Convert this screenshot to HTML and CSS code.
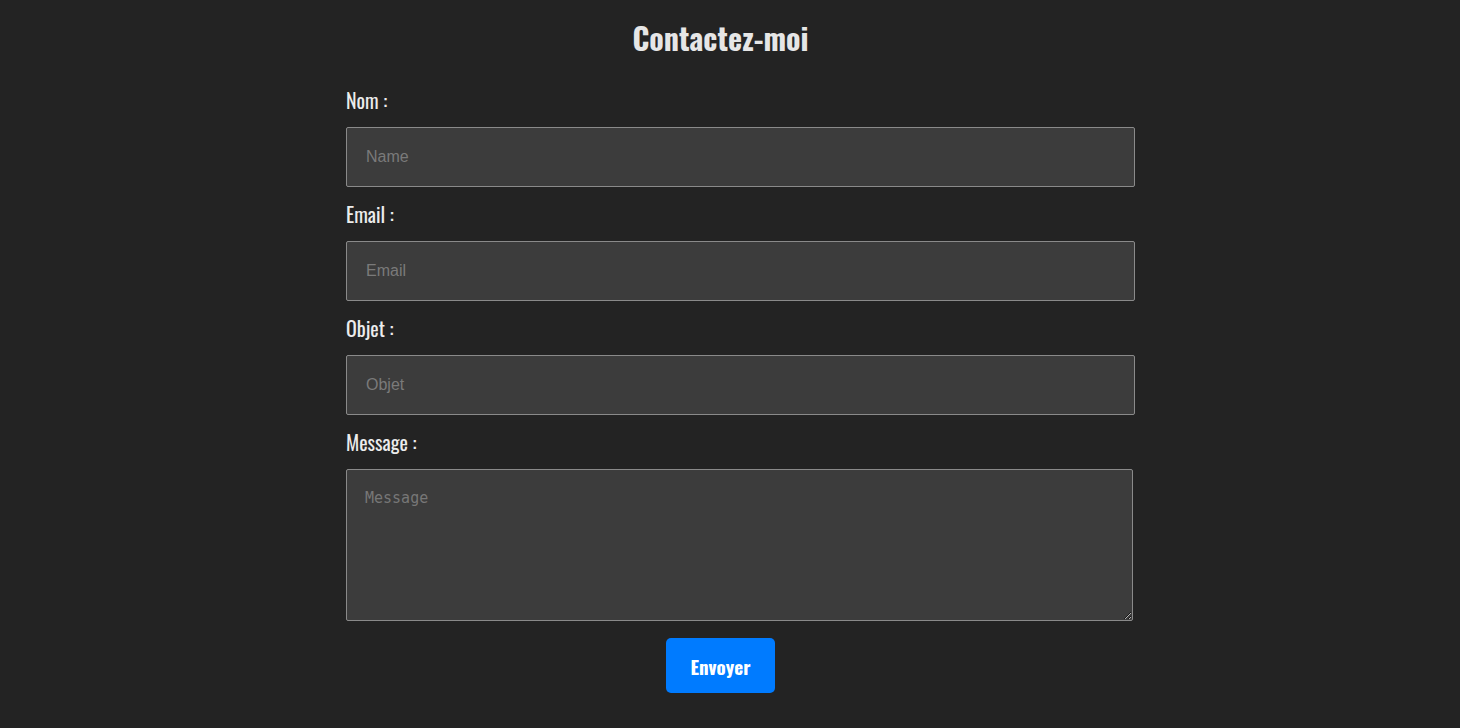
FILE: index.html
```html
<!DOCTYPE html>
<html lang="fr">
<head>
<meta charset="utf-8">
<title>Contact</title>
<link rel="stylesheet" href="styles.css">
</head>
<body>
<main class="page">
  <section class="contact">
    <h1 class="title">Contactez-moi</h1>
    <form class="form">
      <label class="label" for="nom">Nom :</label>
      <input class="field" id="nom" type="text" placeholder="Name">
      <label class="label" for="email">Email :</label>
      <input class="field" id="email" type="email" placeholder="Email">
      <label class="label" for="objet">Objet :</label>
      <input class="field" id="objet" type="text" placeholder="Objet">
      <label class="label" for="message">Message :</label>
      <textarea class="area" id="message" placeholder="Message"></textarea>
      <button class="send" type="submit">Envoyer</button>
    </form>
  </section>
</main>
</body>
</html>
```

FILE: styles.css
```css
html, body {
  margin: 0;
  padding: 0;
  background: #232323;
}
.page {
  padding-right: 19px;
}
.contact {
  width: 749px;
  margin: 0 auto;
  display: flex;
  flex-direction: column;
}
.title {
  margin: 18px 0 29px;
  font-family: "Oswald", "Liberation Sans Narrow", "DejaVu Sans Condensed", sans-serif;
  font-weight: 700;
  font-size: 30px;
  line-height: 40px;
  color: #e6e6e6;
  text-align: center;
}
.form {
  display: flex;
  flex-direction: column;
}
.label {
  font-family: "Oswald", "Liberation Sans Narrow", "DejaVu Sans Condensed", sans-serif;
  font-weight: 400;
  font-size: 20px;
  line-height: 27px;
  color: #ececec;
  margin-bottom: 13px;
}
.field {
  box-sizing: content-box;
  width: 749px;
  height: 58px;
  padding: 0 19px;
  margin: 0 0 14px;
  border: 1px solid #8a8a8a;
  border-radius: 2px;
  background: #3c3c3c;
  color: #ddd;
  font-family: "Liberation Sans", Arial, sans-serif;
  font-size: 16px;
  outline: none;
}
.field::placeholder {
  color: #7a7a7a;
}
.area {
  box-sizing: content-box;
  width: 749px;
  height: 114px;
  padding: 18px;
  margin: 0 0 17px;
  border: 1px solid #8a8a8a;
  border-radius: 2px;
  background: #3c3c3c;
  color: #ddd;
  font-family: "DejaVu Sans Mono", monospace;
  font-size: 15px;
  line-height: 20px;
  outline: none;
}
.area::placeholder {
  color: #777;
}
.send {
  align-self: center;
  width: 109px;
  height: 55px;
  border: none;
  border-radius: 5px;
  background: #007bff;
  color: #fff;
  font-family: "Oswald", "Liberation Sans Narrow", "DejaVu Sans Condensed", sans-serif;
  font-weight: 700;
  font-size: 19px;
  cursor: pointer;
}
```
